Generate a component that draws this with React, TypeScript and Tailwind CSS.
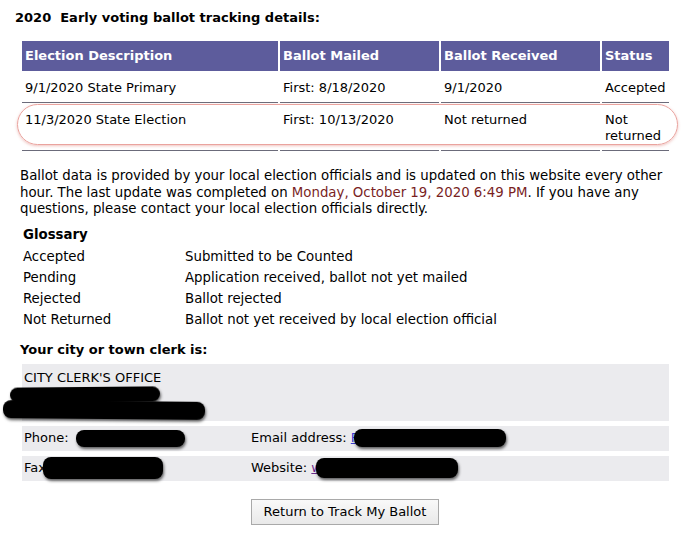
import React from 'react';

const rows = [
  { desc: '9/1/2020 State Primary', mailed: 'First: 8/18/2020', received: '9/1/2020', status: 'Accepted' },
  { desc: '11/3/2020 State Election', mailed: 'First: 10/13/2020', received: 'Not returned', status: 'Not returned' },
];

const glossary = [
  ['Accepted', 'Submitted to be Counted'],
  ['Pending', 'Application received, ballot not yet mailed'],
  ['Rejected', 'Ballot rejected'],
  ['Not Returned', 'Ballot not yet received by local election official'],
];

// black marker scribble used to hide personal data
const Redact = ({ className }: { className: string }) => (
  <span className={`inline-block bg-black rounded-[8px] blur-[0.7px] shadow-[1px_2px_3px_rgba(0,0,0,0.6)] align-middle ${className}`} />
);

const App: React.FC = () => {
  return (
    <div className="w-[693px] h-[555px] bg-white text-black font-['DejaVu_Sans',Verdana,sans-serif] text-[13px] overflow-hidden">
      <h1 className="pl-[15px] pt-[9px] font-bold text-[13px] leading-[18px] whitespace-pre">2020  Early voting ballot tracking details:</h1>

      <div className="relative ml-[20px] mt-[12px] w-[651px]">
        <table className="w-full border-separate border-spacing-[2px] leading-[16px]">
          <thead>
            <tr className="text-white font-bold text-left">
              <th className="w-[256px] h-[30px] bg-[#5d5c9c] pl-[3px] font-bold">Election Description</th>
              <th className="w-[159px] bg-[#5d5c9c] pl-[3px] font-bold">Ballot Mailed</th>
              <th className="w-[159px] bg-[#5d5c9c] pl-[3px] font-bold">Ballot Received</th>
              <th className="bg-[#5d5c9c] pl-[3px] font-bold">Status</th>
            </tr>
          </thead>
          <tbody>
            {rows.map((r) => (
              <tr key={r.desc} className="align-top">
                <td className="pl-[3px] pt-[7px] pb-[6px] border-b border-[#6b6b7a]">{r.desc}</td>
                <td className="pl-[3px] pt-[7px] pb-[6px] border-b border-[#6b6b7a]">{r.mailed}</td>
                <td className="pl-[3px] pt-[7px] pb-[6px] border-b border-[#6b6b7a]">{r.received}</td>
                <td className="pl-[3px] pr-[2px] pt-[7px] pb-[6px] border-b border-[#6b6b7a]">{r.status}</td>
              </tr>
            ))}
          </tbody>
        </table>
        {/* highlight drawn around the second row */}
        <div className="absolute left-[-3px] top-[65px] w-[661px] h-[41px] rounded-[22px] border-[1.5px] border-[#eaa39e] shadow-[0_1px_3px_rgba(220,120,110,0.45)] pointer-events-none" />
      </div>

      <p className="mx-[20px] mt-[14px] font-['DejaVu_Sans_Condensed','DejaVu_Sans',Tahoma,sans-serif] text-[14.8px] leading-[16.5px]">
        Ballot data is provided by your local election officials and is updated on this website every other hour. The last update was completed on{' '}
        <span className="text-[#7a1f1f]">Monday, October 19, 2020 6:49 PM</span>. If you have any questions, please contact your local election officials directly.
      </p>

      <div className="ml-[23px] mt-[8px] font-['DejaVu_Sans_Condensed','DejaVu_Sans',Tahoma,sans-serif] text-[14.8px]">
        <div className="font-bold leading-[18px]">Glossary</div>
        <div className="mt-[3px] grid grid-cols-[162px_1fr] auto-rows-[21px] items-center">
          {glossary.map(([term, meaning]) => (
            <React.Fragment key={term}>
              <span>{term}</span>
              <span>{meaning}</span>
            </React.Fragment>
          ))}
        </div>
      </div>

      <div className="ml-[20px] mt-[11px] font-bold leading-[18px]">Your city or town clerk is:</div>

      <div className="ml-[22px] mt-[5px] w-[647px] flex flex-col gap-[5px]">
        <div className="h-[57px] bg-[#ebebee] pl-[2px] pt-[5px] leading-[17px]">
          <div>CITY CLERK'S OFFICE</div>
          <div className="flex flex-col items-start -ml-[14px] mt-[1px]">
            <Redact className="w-[150px] h-[15px] -rotate-[0.5deg]" />
            <Redact className="-ml-[7px] -mt-[1px] w-[202px] h-[18px] rotate-[0.5deg]" />
          </div>
        </div>
        <div className="h-[25px] bg-[#ebebee] pl-[2px] flex items-center">
          <div className="w-[227px] flex items-center">
            Phone:&nbsp;<Redact className="ml-[3px] w-[109px] h-[17px]" />
          </div>
          <div className="flex items-center">
            Email address:&nbsp;<span className="text-[#3b3bd0] underline">F</span>
            <Redact className="-ml-[4px] w-[152px] h-[18px]" />
          </div>
        </div>
        <div className="h-[25px] bg-[#ebebee] pl-[2px] flex items-center">
          <div className="w-[227px] flex items-center">
            Fax<Redact className="-ml-[3px] w-[120px] h-[22px]" />
          </div>
          <div className="flex items-center">
            Website:&nbsp;<span className="text-[#6b2a8a] underline">w</span>
            <Redact className="-ml-[6px] w-[142px] h-[20px]" />
          </div>
        </div>
      </div>

      <div className="mt-[18px] ml-[251px]">
        <button className="w-[188px] h-[26px] border border-[#a9a9a9] bg-gradient-to-b from-[#f9f9f9] to-[#e9e9e9] text-[13px] leading-[16px]">
          Return to Track My Ballot
        </button>
      </div>
    </div>
  );
};

export default App;
